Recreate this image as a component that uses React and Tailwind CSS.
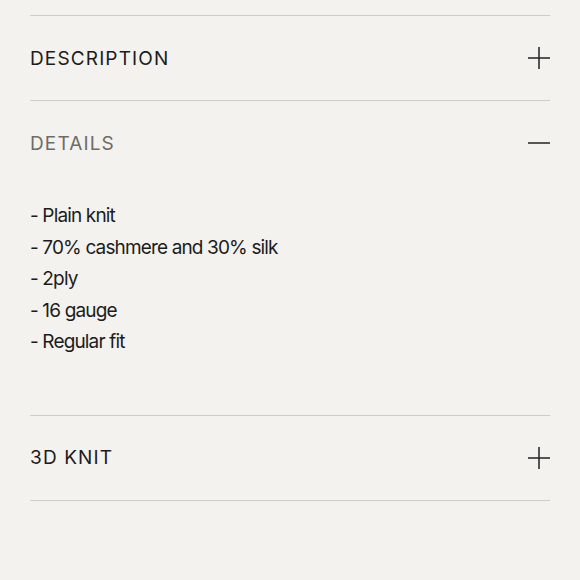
const items = [
  { title: "DESCRIPTION", open: false },
  {
    title: "DETAILS",
    open: true,
    lines: ["- Plain knit", "- 70% cashmere and 30% silk", "- 2ply", "- 16 gauge", "- Regular fit"],
  },
  { title: "3D KNIT", open: false },
];

const Plus = () => (
  <svg width="22" height="22" viewBox="0 0 22 22" fill="none" stroke="#222" strokeWidth="1.5">
    <path d="M0 11H22M11 0V22" />
  </svg>
);

const Minus = () => (
  <svg width="22" height="22" viewBox="0 0 22 22" fill="none" stroke="#222" strokeWidth="1.5">
    <path d="M0 11H22" />
  </svg>
);

export default function App() {
  return (
    <div className="min-h-[580px] w-[580px] bg-[#f3f2ee] px-[30px] pt-[15px] font-['Inter',sans-serif]">
      {items.map((item) => (
        <div key={item.title} className="border-t border-[#cfcdc7]">
          <div className="flex h-[84px] items-center justify-between pt-[2px]">
            <span
              className={
                "text-[19px] tracking-[0.06em] " +
                (item.open ? "text-[#6e6c69]" : "text-[#1c1c1c]")
              }
            >
              {item.title}
            </span>
            <span className="-mt-[2px]">{item.open ? <Minus /> : <Plus />}</span>
          </div>
          {item.open && (
            <ul className="pt-[15px] pb-[57px] text-[19px] leading-[31.5px] tracking-[-0.045em] text-[#1c1c1c]">
              {item.lines.map((l) => (
                <li key={l}>{l}</li>
              ))}
            </ul>
          )}
        </div>
      ))}
      <div className="border-t border-[#cfcdc7]" />
    </div>
  );
}
